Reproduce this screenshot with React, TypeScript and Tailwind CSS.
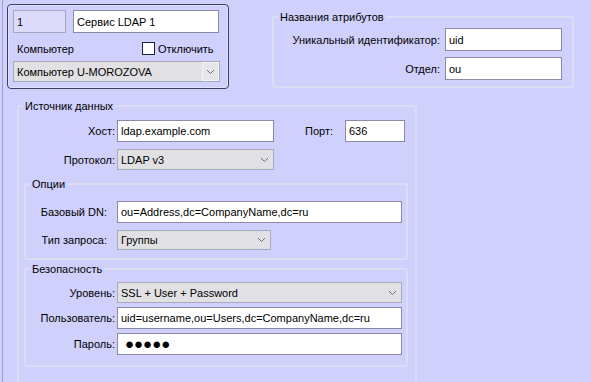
import React from "react";

// Text box that looks like a classic Windows edit control
const Field = ({
  value,
  width,
  height = 22,
  tint = false,
  children,
}: {
  value?: string;
  width: number;
  height?: number;
  tint?: boolean;
  children?: React.ReactNode;
}) => (
  <div
    className={`flex items-center pl-[3px] border border-[#8a8aa6] shrink-0 whitespace-nowrap overflow-hidden ${
      tint ? "bg-[#dcdcfa] border-[#a6a6c4]" : "bg-white"
    }`}
    style={{ width, height }}
  >
    {children ?? value}
  </div>
);

const Chevron = () => (
  <svg width="9" height="6" viewBox="0 0 9 6" className="block">
    <polyline points="1,1 4.5,4.5 8,1" fill="none" stroke="#6c6c7e" strokeWidth="1" />
  </svg>
);

// Combo box
const Select = ({
  value,
  width,
  height = 21,
  boxed = false,
}: {
  value: string;
  width: number;
  height?: number;
  boxed?: boolean;
}) => (
  <div
    className="flex items-center bg-[#e1e1e4] border border-[#a9a9bd] shrink-0 whitespace-nowrap"
    style={{ width, height }}
  >
    <span className="flex-1 pl-[3px] overflow-hidden">{value}</span>
    <div
      className={`flex items-center justify-center w-[17px] h-full ${
        boxed ? "border border-[#f4f4f8] bg-[#e6e6ea]" : ""
      }`}
    >
      <Chevron />
    </div>
  </div>
);

const Group = ({
  title,
  className,
  children,
}: {
  title: string;
  className: string;
  children: React.ReactNode;
}) => (
  <fieldset
    className={`border-2 border-[#dcdcf5] rounded-[3px] min-w-0 ${className}`}
  >
    <legend className="ml-[4px] px-[2px] leading-[14px]">{title}</legend>
    {children}
  </fieldset>
);

const App = () => {
  return (
    <div className="w-[591px] h-[382px] overflow-hidden bg-[#d0d0fc] text-[11px] leading-[14px] text-black font-['Liberation_Sans',Arial,sans-serif]">
      <div className="ml-[2px] h-full border-l border-[#a2a2c8]">
        {/* top row */}
        <div className="flex items-start">
          <div className="ml-[4px] mt-[4px] w-[222px] h-[85px] border border-[#3e3e5e] rounded-[4px] shadow-[inset_0_0_0_1px_#e2e2fe] pl-[5px] pt-[5px]">
            <div className="flex gap-[7px]">
              <Field value="1" width={53} height={23} tint />
              <Field value="Сервис LDAP 1" width={146} height={23} />
            </div>
            <div className="flex items-center h-[15px] mt-[8px]">
              <span className="ml-[4px]">Компьютер</span>
              <div className="ml-[68px] w-[13px] h-[13px] bg-white border border-[#20203c]" />
              <span className="ml-[3px]">Отключить</span>
            </div>
            <div className="mt-[5px]">
              <Select value="Компьютер U-MOROZOVA" width={207} boxed />
            </div>
          </div>

          <Group title="Названия атрибутов" className="ml-[43px] mt-[10px] w-[302px] h-[78px]">
            <div className="flex flex-col gap-[6px] mt-[4px] pr-[10px]">
              <div className="flex items-center justify-end gap-[5px]">
                <span>Уникальный идентификатор:</span>
                <Field value="uid" width={117} height={23} />
              </div>
              <div className="flex items-center justify-end gap-[5px]">
                <span>Отдел:</span>
                <Field value="ou" width={117} height={23} />
              </div>
            </div>
          </Group>
        </div>

        {/* data source */}
        <Group title="Источник данных" className="ml-[14px] mt-[10px] w-[400px] h-[300px]">
          <div className="flex items-center mt-[7px]">
            <span className="w-[96px] text-right">Хост:</span>
            <div className="ml-[2px]">
              <Field value="ldap.example.com" width={157} />
            </div>
            <span className="ml-[31px]">Порт:</span>
            <div className="ml-[12px]">
              <Field value="636" width={60} />
            </div>
          </div>
          <div className="flex items-center mt-[7px]">
            <span className="w-[96px] text-right">Протокол:</span>
            <div className="ml-[2px]">
              <Select value="LDAP v3" width={157} />
            </div>
          </div>

          <Group title="Опции" className="ml-[5px] mt-[7px] w-[384px] h-[83px]">
            <div className="flex items-center mt-[10px]">
              <span className="w-[81px] text-right">Базовый DN:</span>
              <div className="ml-[10px]">
                <Field value="ou=Address,dc=CompanyName,dc=ru" width={285} />
              </div>
            </div>
            <div className="flex items-center mt-[7px]">
              <span className="w-[81px] text-right">Тип запроса:</span>
              <div className="ml-[10px]">
                <Select value="Группы" width={154} height={20} />
              </div>
            </div>
          </Group>

          <Group title="Безопасность" className="ml-[5px] mt-[2px] w-[384px] h-[105px]">
            <div className="flex items-center mt-[6px]">
              <span className="w-[89px] text-right">Уровень:</span>
              <div className="ml-[2px]">
                <Select value="SSL + User + Password" width={285} />
              </div>
            </div>
            <div className="flex items-center mt-[4px]">
              <span className="w-[89px] text-right">Пользователь:</span>
              <div className="ml-[2px]">
                <Field value="uid=username,ou=Users,dc=CompanyName,dc=ru" width={285} />
              </div>
            </div>
            <div className="flex items-center mt-[4px]">
              <span className="w-[89px] text-right">Пароль:</span>
              <div className="ml-[2px]">
                <Field width={285}>
                  <span className="ml-[4px] text-[15px] leading-[16px]">●●●●●</span>
                </Field>
              </div>
            </div>
          </Group>
        </Group>
      </div>
    </div>
  );
};

export default App;
